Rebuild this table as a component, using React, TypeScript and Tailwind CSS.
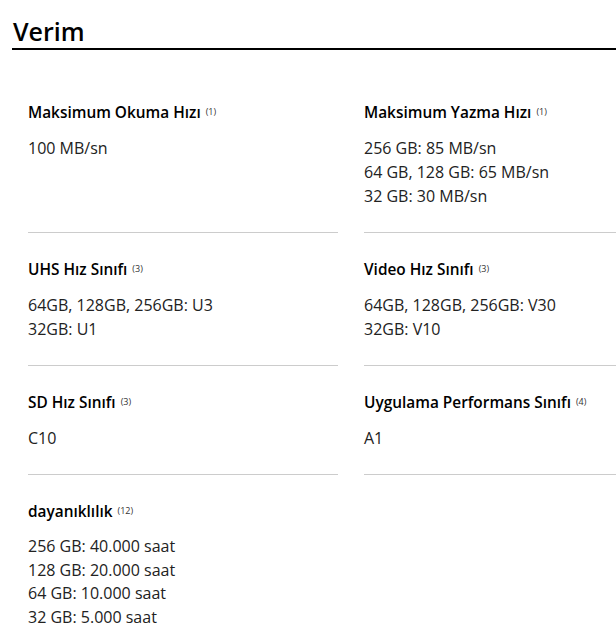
import React from "react";

type Cell = { title: string; note: string; values: string[] };

const cells: Cell[] = [
  { title: "Maksimum Okuma Hızı", note: "(1)", values: ["100 MB/sn"] },
  {
    title: "Maksimum Yazma Hızı",
    note: "(1)",
    values: ["256 GB: 85 MB/sn", "64 GB, 128 GB: 65 MB/sn", "32 GB: 30 MB/sn"],
  },
  { title: "UHS Hız Sınıfı", note: "(3)", values: ["64GB, 128GB, 256GB: U3", "32GB: U1"] },
  { title: "Video Hız Sınıfı", note: "(3)", values: ["64GB, 128GB, 256GB: V30", "32GB: V10"] },
  { title: "SD Hız Sınıfı", note: "(3)", values: ["C10"] },
  { title: "Uygulama Performans Sınıfı", note: "(4)", values: ["A1"] },
  {
    title: "dayanıklılık",
    note: "(12)",
    values: ["256 GB: 40.000 saat", "128 GB: 20.000 saat", "64 GB: 10.000 saat", "32 GB: 5.000 saat"],
  },
];

function SpecCell({ c, last }: { c: Cell; last?: boolean }) {
  return (
    <div className={`pt-[27px] pb-[24px] ${last ? "" : "border-b border-[#cccccc]"}`}>
      <div className="text-[15.4px] leading-[20px] font-semibold text-[#000000]">
        {c.title}
        <sup className="ml-[5px] text-[9px] font-normal text-[#333333] relative top-[-3px] align-baseline">
          {c.note}
        </sup>
      </div>
      <div className="mt-[13px] text-[16px] leading-[24px] text-[#222222]">
        {c.values.map((v, i) => (
          <div key={i} className={last ? "leading-[23.7px]" : ""}>
            {v}
          </div>
        ))}
      </div>
    </div>
  );
}

export default function App() {
  return (
    <div
      className="w-[616px] h-[626px] overflow-hidden bg-white"
      style={{ fontFamily: '"Open Sans", "Noto Sans", sans-serif' }}
    >
      <div className="pl-[12px] pt-[15px] w-[700px]">
        <h2 className="pl-[1px] text-[25px] leading-[32px] font-semibold text-[#000000] pb-[1px] border-b-2 border-[#000000]">
          Verim
        </h2>
        <div className="pl-[16px] mt-[26px] grid grid-cols-[310px_310px] gap-x-[26px]">
          {cells.map((c, i) => (
            <SpecCell key={i} c={c} last={i === 6} />
          ))}
        </div>
      </div>
    </div>
  );
}
